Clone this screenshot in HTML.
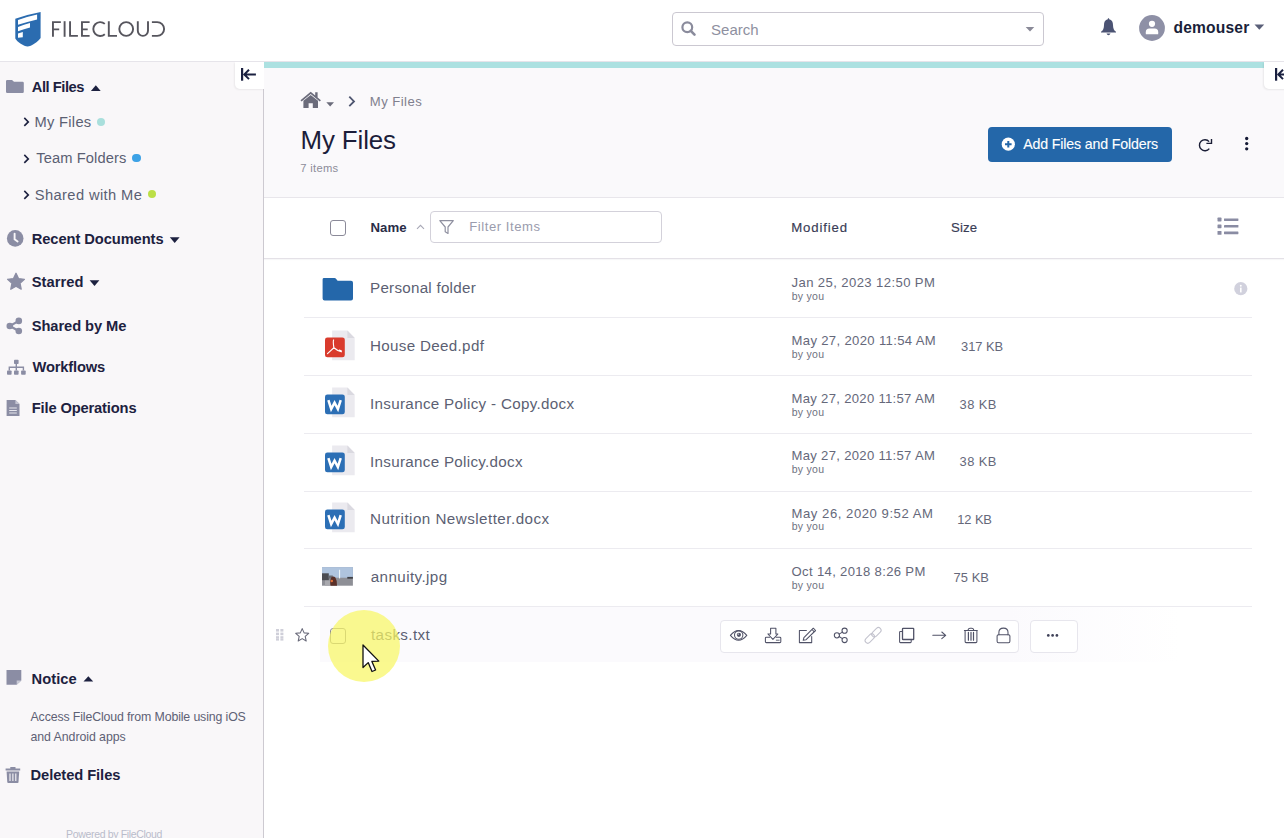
<!DOCTYPE html>
<html><head><meta charset="utf-8"><style>
*{margin:0;padding:0;box-sizing:content-box}
html,body{width:1284px;height:838px;overflow:hidden;background:#fff;font-family:"Liberation Sans",sans-serif}
.a{position:absolute}
.t{position:absolute;white-space:nowrap;line-height:1}
#hdr{position:absolute;left:0;top:0;width:1284px;height:61px;background:#fff;border-bottom:1px solid #e6e4ea}
#side{position:absolute;left:0;top:62px;width:263px;height:776px;background:#f9f7f9;border-right:1px solid #cdcad1}
#topsec{position:absolute;left:264px;top:62px;width:1020px;height:135px;background:#faf9fb;border-bottom:1px solid #e8e6eb}
#thead{position:absolute;left:264px;top:198px;width:1020px;height:60px;background:#fff;border-bottom:1px solid #e4e1e7;box-shadow:0 1px 1px rgba(60,40,70,0.04)}
</style></head><body>
<div id="hdr"></div>
<svg class="a" style="left:0;top:0" width="180" height="60" viewBox="0 0 180 60">
<path d="M15.3 18.8 Q28 14.3 40.6 12 L40.6 38 C38.5 41.5 31 46.6 27.5 46.6 C24 46.6 17 42 15.3 38.6 Z" fill="#2b6cb0"/>
<path d="M18 20 Q27.5 16.5 37.1 14.5 L37.1 19.5 Q27.5 21.8 18 24.8 Z" fill="#fff"/>
<path d="M18 27 Q24 24.6 30 23 L30 27.5 Q24 29 18 31.3 Z" fill="#fff"/>
<path d="M18 33.6 L22.8 32 L22.8 37.3 L18 37.8 Z" fill="#fff"/>
<g fill="none" stroke="#56555d" stroke-width="1.9">
<path d="M52.95 36.8 V21.2 M52.95 22.1 H60.85 M52.95 29.35 H59.2"/>
<path d="M64.6 21.2 V36.8"/>
<path d="M70.05 21.2 V35.9 H77.9"/>
<path d="M81.97 21.2 V36.8 M81.1 22.1 H89.6 M81.97 29.35 H87.7 M81.1 35.9 H89.6"/>
<path d="M104.8 23.9 A6.9 6.9 0 1 0 104.8 34.2"/>
<path d="M108.8 21.2 V35.9 H117"/>
<circle cx="126.2" cy="29" r="6.9"/>
<path d="M137.8 21.2 V30.8 A5.1 5.1 0 0 0 148 30.8 V21.2"/>
<path d="M151.9 22.1 H157.2 A6.9 6.9 0 0 1 157.2 35.9 H151.9"/>
</g></svg>
<div class="a" style="left:672px;top:12px;width:370px;height:32px;border:1px solid #cbc8d1;border-radius:4px;background:#fff"></div>
<svg class="a" style="left:678px;top:18px" width="22" height="22" viewBox="0 0 22 22">
<circle cx="9.3" cy="9.3" r="4.9" fill="none" stroke="#8a8b9c" stroke-width="2.2"/>
<path d="M12.8 12.8 L16.5 16.6" stroke="#8a8b9c" stroke-width="2.6" stroke-linecap="round"/></svg>
<div class="t" style="left:711.06px;top:22px;font-size:15px;color:#8e90a0;letter-spacing:0.014px;">Search</div>
<svg class="a" style="left:1025px;top:26px" width="10" height="6"><path d="M0.7 1 H9.3 L5 5.6Z" fill="#8a8a98"/></svg>
<svg class="a" style="left:1100px;top:17px" width="17" height="19" viewBox="0 0 17 19">
<path d="M8.5 1.2 C9.1 1.2 9.2 1.8 9.2 2.2 C12 2.8 13 5 13 8 C13 11.5 14 13.5 16 14.8 L16 15.6 L1 15.6 L1 14.8 C3 13.5 4 11.5 4 8 C4 5 5 2.8 7.8 2.2 C7.8 1.8 7.9 1.2 8.5 1.2Z" fill="#4b5373"/>
<path d="M6.5 16.6 H10.5 Q9.8 18.2 8.5 18.2 Q7.2 18.2 6.5 16.6Z" fill="#4b5373"/></svg>
<svg class="a" style="left:1139px;top:15px" width="26" height="26" viewBox="0 0 26 26">
<circle cx="13" cy="13" r="12.9" fill="#8e90a6"/>
<circle cx="13" cy="8.8" r="3.1" fill="#fff"/>
<path d="M6.8 19.2 V17.2 Q6.8 13.6 10.4 13.6 H15.6 Q19.2 13.6 19.2 17.2 V19.2Z" fill="#fff"/></svg>
<div class="t" style="left:1173.52px;top:20px;font-size:15.6px;color:#1a1f3a;font-weight:700;letter-spacing:0.170px;">demouser</div>
<svg class="a" style="left:1254px;top:24px" width="11" height="7"><path d="M0.5 0.6 H10.2 L5.35 5.8Z" fill="#5a5f78"/></svg>
<div id="side"></div>
<div class="a" style="left:235px;top:62px;width:29px;height:27px;background:#fff;border-bottom-left-radius:5px;box-shadow:-1px 1px 2px rgba(0,0,0,0.06)"></div>
<svg class="a" style="left:238px;top:64px" width="22" height="20" viewBox="0 0 22 20">
<path d="M4.1 4 V16.7" stroke="#1a2040" stroke-width="2.2"/>
<path d="M17.9 10.4 H6.5 M11 5.7 L6.3 10.4 L11 15.1" fill="none" stroke="#1a2040" stroke-width="2"/></svg>
<svg class="a" style="left:6px;top:80px" width="18" height="13" viewBox="0 0 18 13">
<path d="M1.2 0 H6 L8 1.8 H16.6 Q17.8 1.8 17.8 3 V11.8 Q17.8 13 16.6 13 H1.2 Q0 13 0 11.8 V1.2 Q0 0 1.2 0Z" fill="#8b8da4"/></svg>
<div class="t" style="left:31.76px;top:80px;font-size:14.7px;color:#1d2140;font-weight:700;letter-spacing:-0.452px;">All Files</div>
<svg class="a" style="left:90px;top:85px" width="11" height="6"><path d="M0.9 5.9 H10.7 L5.8 0.3Z" fill="#1d2140"/></svg>
<svg class="a" style="left:23px;top:117px" width="8" height="10" viewBox="0 0 8 10"><path d="M1.3 0.9 L5.3 4.9 L1.3 8.9" fill="none" stroke="#1d2140" stroke-width="1.6"/></svg>
<div class="t" style="left:34.56px;top:115px;font-size:14.7px;color:#5b5f73;letter-spacing:0.285px;">My Files</div>
<div class="a" style="left:97px;top:117.5px;width:8px;height:8px;border-radius:50%;background:#a9dfdc"></div>
<svg class="a" style="left:23px;top:153.5px" width="8" height="10" viewBox="0 0 8 10"><path d="M1.3 0.9 L5.3 4.9 L1.3 8.9" fill="none" stroke="#1d2140" stroke-width="1.6"/></svg>
<div class="t" style="left:36.24px;top:151px;font-size:14.7px;color:#5b5f73;letter-spacing:0.107px;">Team Folders</div>
<div class="a" style="left:132.3px;top:153.8px;width:8.6px;height:8.6px;border-radius:50%;background:#3da2e6"></div>
<svg class="a" style="left:23px;top:190px" width="8" height="10" viewBox="0 0 8 10"><path d="M1.3 0.9 L5.3 4.9 L1.3 8.9" fill="none" stroke="#1d2140" stroke-width="1.6"/></svg>
<div class="t" style="left:34.80px;top:188px;font-size:14.7px;color:#5b5f73;letter-spacing:0.386px;">Shared with Me</div>
<div class="a" style="left:148px;top:190px;width:8px;height:8px;border-radius:50%;background:#bcdf47"></div>
<svg class="a" style="left:6px;top:229px" width="19" height="19" viewBox="0 0 19 19">
<circle cx="9.2" cy="9.4" r="8.3" fill="#8b8da4"/>
<path d="M8.6 4.6 V10.2 L11.6 12.4" fill="none" stroke="#f9f7f9" stroke-width="1.9" stroke-linecap="round"/></svg>
<div class="t" style="left:31.76px;top:232px;font-size:14.7px;color:#1d2140;font-weight:700;letter-spacing:-0.080px;">Recent Documents</div>
<svg class="a" style="left:169px;top:237px" width="11" height="7"><path d="M0.8 0.3 H10.6 L5.7 5.9Z" fill="#1d2140"/></svg>
<svg class="a" style="left:6px;top:272px" width="20" height="19" viewBox="0 0 20 19">
<path d="M10 1.3 L12.5 6.6 L18.4 7.3 L14 11.2 L15.2 17.2 L10 14.3 L4.8 17.2 L6 11.2 L1.6 7.3 L7.5 6.6Z" fill="#8b8da4" stroke="#8b8da4" stroke-width="1.3" stroke-linejoin="round"/></svg>
<div class="t" style="left:31.76px;top:275px;font-size:14.7px;color:#1d2140;font-weight:700;letter-spacing:0.038px;">Starred</div>
<svg class="a" style="left:88.5px;top:280px" width="11" height="7"><path d="M0.6 0.2 H10.4 L5.5 5.9Z" fill="#1d2140"/></svg>
<svg class="a" style="left:6px;top:317px" width="17" height="18" viewBox="0 0 17 18">
<circle cx="12.8" cy="3.9" r="3.3" fill="#8b8da4"/><circle cx="3.8" cy="9" r="3.3" fill="#8b8da4"/><circle cx="12.8" cy="14" r="3.3" fill="#8b8da4"/>
<path d="M12.8 3.9 L3.8 9 L12.8 14" fill="none" stroke="#8b8da4" stroke-width="2.2"/></svg>
<div class="t" style="left:31.76px;top:319px;font-size:14.7px;color:#1d2140;font-weight:700;letter-spacing:-0.074px;">Shared by Me</div>
<svg class="a" style="left:6px;top:359px" width="21" height="18" viewBox="0 0 21 18">
<rect x="8" y="0.8" width="4.6" height="4.2" rx="0.8" fill="#8b8da4"/>
<path d="M10.3 5 V8.2 M3.3 11.5 V8.2 H17.4 V11.5 M10.3 8.2 V11.5" fill="none" stroke="#8b8da4" stroke-width="1.4"/>
<rect x="1" y="11.5" width="4.6" height="4.2" rx="0.8" fill="#8b8da4"/><rect x="8" y="11.5" width="4.6" height="4.2" rx="0.8" fill="#8b8da4"/><rect x="15.1" y="11.5" width="4.6" height="4.2" rx="0.8" fill="#8b8da4"/></svg>
<div class="t" style="left:32.46px;top:360px;font-size:14.7px;color:#1d2140;font-weight:700;letter-spacing:-0.164px;">Workflows</div>
<svg class="a" style="left:6px;top:400px" width="15" height="17" viewBox="0 0 15 17">
<path d="M0.6 0 H9.4 L13.5 4.1 V16 H0.6Z" fill="#8b8da4"/>
<path d="M9.4 0 V4.1 H13.5" fill="#c5c6d3"/>
<path d="M3.2 8 H10.8 M3.2 10.5 H10.8 M3.2 13 H10.8" stroke="#f1f0f5" stroke-width="0.9"/></svg>
<div class="t" style="left:31.76px;top:401px;font-size:14.7px;color:#1d2140;font-weight:700;letter-spacing:-0.147px;">File Operations</div>
<svg class="a" style="left:6px;top:670px" width="16" height="16" viewBox="0 0 16 16">
<path d="M0.5 0 H15.3 V10.5 L10.7 14.8 H0.5Z" fill="#8b8da4"/>
<path d="M15.3 10.5 H10.7 V14.8Z" fill="#c9cad6"/></svg>
<div class="t" style="left:31.52px;top:672px;font-size:14.7px;color:#1d2140;font-weight:700;letter-spacing:0.058px;">Notice</div>
<svg class="a" style="left:82.5px;top:676px" width="11" height="6"><path d="M0.5 5.4 H10.2 L5.35 0.2Z" fill="#1d2140"/></svg>
<div class="t" style="left:30.52px;top:711px;font-size:12.35px;color:#5e6175;letter-spacing:-0.132px;">Access FileCloud from Mobile using iOS</div>
<div class="t" style="left:30.52px;top:731px;font-size:12.35px;color:#5e6175;letter-spacing:-0.062px;">and Android apps</div>
<svg class="a" style="left:5px;top:766px" width="16" height="18" viewBox="0 0 16 18">
<path d="M5.3 1 H10.5 V2.4 H15.2 V4.4 H0.6 V2.4 H5.3Z" fill="#8b8da4"/>
<path d="M1.6 5.5 H14.2 L13.5 16.2 Q13.4 17 12.6 17 H3.2 Q2.4 17 2.3 16.2Z" fill="#8b8da4"/>
<path d="M5 7.5 V15 M7.9 7.5 V15 M10.8 7.5 V15" stroke="#f9f7f9" stroke-width="1.1"/></svg>
<div class="t" style="left:30.52px;top:768px;font-size:14.7px;color:#1d2140;font-weight:700;letter-spacing:-0.060px;">Deleted Files</div>
<div class="t" style="left:66.06px;top:829px;font-size:10.5px;color:#b9bccb;letter-spacing:-0.334px;">Powered by FileCloud</div>
<div id="topsec"></div>
<div class="a" style="left:264px;top:62px;width:1000px;height:6px;background:#ace1e1"></div>
<div class="a" style="left:1264px;top:62px;width:24px;height:27px;background:#fff;border-bottom-left-radius:5px;box-shadow:-1px 1px 2px rgba(0,0,0,0.07)"></div>
<svg class="a" style="left:1272px;top:64px" width="14" height="20" viewBox="0 0 14 20">
<path d="M4.1 4 V16.7" stroke="#1a2040" stroke-width="2.2"/>
<path d="M17.9 10.4 H6.5 M11 5.7 L6.3 10.4 L11 15.1" fill="none" stroke="#1a2040" stroke-width="2"/></svg>
<svg class="a" style="left:299px;top:90px" width="24" height="19" viewBox="0 0 24 19">
<path d="M11.7 1.8 L1.5 10.2 L2.6 11.5 L11.7 4 L20.8 11.5 L21.9 10.2 L18.6 7.5 V2.2 H16.2 V5.5Z" fill="#6b6c7b"/>
<path d="M4.4 10.8 L11.7 4.9 L19 10.8 V18 H13.8 V13.2 H9.6 V18 H4.4Z" fill="#6b6c7b"/></svg>
<svg class="a" style="left:326px;top:101.5px" width="9" height="5"><path d="M0.3 0.3 H8 L4.15 4.6Z" fill="#6b6c7b"/></svg>
<svg class="a" style="left:347px;top:95px" width="10" height="13" viewBox="0 0 10 13"><path d="M2.3 1.6 L7 6.4 L2.3 11.2" fill="none" stroke="#4e5670" stroke-width="1.8"/></svg>
<div class="t" style="left:369.80px;top:95px;font-size:13.1px;color:#80808e;letter-spacing:0.455px;">My Files</div>
<div class="t" style="left:300.58px;top:128px;font-size:25.9px;color:#1b1d3a;letter-spacing:-0.138px;">My Files</div>
<div class="t" style="left:300.28px;top:163px;font-size:11.2px;color:#8c8c99;letter-spacing:0.307px;">7 items</div>
<div class="a" style="left:988px;top:127.4px;width:184px;height:34.3px;background:#2467a9;border-radius:4px"></div>
<svg class="a" style="left:1001px;top:137px" width="15" height="15" viewBox="0 0 15 15">
<circle cx="7.3" cy="7.2" r="6.6" fill="#fff"/>
<path d="M7.3 3.9 V10.5 M4 7.2 H10.6" stroke="#2467a9" stroke-width="2"/></svg>
<div class="t" style="left:1023.20px;top:137px;font-size:14.2px;color:#ffffff;letter-spacing:-0.152px;-webkit-text-stroke:0.1px #fff;">Add Files and Folders</div>
<svg class="a" style="left:1197px;top:137px" width="16" height="16" viewBox="0 0 16 16">
<path d="M12.1 4.6 A5.5 5.5 0 1 0 12.3 11.6" fill="none" stroke="#1a1e36" stroke-width="1.4"/>
<path d="M9.4 6.4 H14.5 V2" fill="none" stroke="#1a1e36" stroke-width="1.4"/></svg>
<svg class="a" style="left:1243px;top:135px" width="8" height="17" viewBox="0 0 8 17">
<circle cx="3.7" cy="3.5" r="1.65" fill="#151a35"/><circle cx="3.7" cy="8.6" r="1.65" fill="#151a35"/><circle cx="3.7" cy="13.8" r="1.65" fill="#151a35"/></svg>
<div id="thead"></div>
<div class="a" style="left:330px;top:220px;width:14px;height:14px;border:1px solid #8b8a99;border-radius:3px;background:#fff"></div>
<div class="t" style="left:370.52px;top:221px;font-size:13.2px;color:#2a2d48;font-weight:700;letter-spacing:0.083px;">Name</div>
<svg class="a" style="left:416px;top:224px" width="9" height="6"><path d="M1 4.8 L4.5 1.3 L8 4.8" fill="none" stroke="#a8a8b6" stroke-width="1.1"/></svg>
<div class="a" style="left:430px;top:211px;width:230px;height:30px;border:1px solid #d3d1da;border-radius:4px;background:#fff"></div>
<svg class="a" style="left:438px;top:219px" width="17" height="16" viewBox="0 0 17 16">
<path d="M1.8 1.6 H15.3 L10 8 V14.5 L7.2 12.8 V8Z" fill="none" stroke="#8f90a0" stroke-width="1.2" stroke-linejoin="round"/></svg>
<div class="t" style="left:469.30px;top:220px;font-size:13.1px;color:#9a9cad;letter-spacing:0.538px;">Filter Items</div>
<div class="t" style="left:791.28px;top:221px;font-size:13.2px;color:#393c55;letter-spacing:0.863px;-webkit-text-stroke:0.15px #393c55;">Modified</div>
<div class="t" style="left:951.00px;top:221px;font-size:13.2px;color:#393c55;letter-spacing:0.109px;-webkit-text-stroke:0.15px #393c55;">Size</div>
<svg class="a" style="left:1216px;top:216px" width="24" height="20" viewBox="0 0 24 20">
<rect x="1.5" y="1.6" width="4" height="3.8" rx="0.6" fill="#8a8ca3"/><rect x="1.5" y="8.4" width="4" height="3.8" rx="0.6" fill="#8a8ca3"/><rect x="1.5" y="15" width="4" height="3.8" rx="0.6" fill="#8a8ca3"/>
<rect x="8" y="2.4" width="14.4" height="2.6" rx="0.4" fill="#8a8ca3"/><rect x="8" y="9" width="14.4" height="2.6" rx="0.4" fill="#8a8ca3"/><rect x="8" y="15.6" width="14.4" height="2.6" rx="0.4" fill="#8a8ca3"/></svg>
<div class="a" style="left:304px;top:317.00px;width:948px;height:1px;background:#ecebf0"></div>
<div class="a" style="left:304px;top:374.75px;width:948px;height:1px;background:#ecebf0"></div>
<div class="a" style="left:304px;top:432.70px;width:948px;height:1px;background:#ecebf0"></div>
<div class="a" style="left:304px;top:490.50px;width:948px;height:1px;background:#ecebf0"></div>
<div class="a" style="left:304px;top:548.30px;width:948px;height:1px;background:#ecebf0"></div>
<div class="a" style="left:304px;top:606.00px;width:948px;height:1px;background:#ecebf0"></div>
<div class="t" style="left:370.04px;top:280px;font-size:15.2px;color:#5c5f73;letter-spacing:0.250px;">Personal folder</div>
<div class="t" style="left:791.52px;top:276px;font-size:13.1px;color:#65687a;letter-spacing:0.399px;">Jan 25, 2023 12:50 PM</div>
<div class="t" style="left:791.76px;top:291px;font-size:10.5px;color:#6e7180;letter-spacing:0.264px;">by you</div>
<svg class="a" style="left:322px;top:277.00px" width="32" height="24" viewBox="0 0 32 24">
<path d="M2 1 H12.5 Q13.5 1 14.2 1.9 L15.6 3.8 H29 Q31 3.8 31 5.8 V21.6 Q31 23.6 29 23.6 H2.6 Q0.6 23.6 0.6 21.6 V2.4 Q0.6 1 2 1Z" fill="#2467aa"/></svg>
<div class="t" style="left:370.04px;top:338px;font-size:15.2px;color:#5c5f73;letter-spacing:0.313px;">House Deed.pdf</div>
<div class="t" style="left:791.52px;top:334px;font-size:13.1px;color:#65687a;letter-spacing:0.338px;">May 27, 2020 11:54 AM</div>
<div class="t" style="left:791.76px;top:349px;font-size:10.5px;color:#6e7180;letter-spacing:0.264px;">by you</div>
<div class="t" style="left:961.02px;top:341px;font-size:12.9px;color:#65687a;letter-spacing:-0.022px;">317 KB</div>
<svg class="a" style="left:322px;top:329.50px" width="34" height="32" viewBox="0 0 34 32">
<path d="M10.1 0.6 H25.4 L32.7 7.9 V30.3 H10.1Z" fill="#ebeaef"/><path d="M25.4 0.6 V7.9 H32.7Z" fill="#dad9e0"/>
<rect x="3" y="7.4" width="19.8" height="19.9" rx="2.4" fill="#d93b2d"/><path d="M11.6 9.9 Q10.9 11.2 11.9 17.8 L5.5 23.6 M11.9 17.8 Q15 20.6 19.3 21.8 Q19.9 20.6 17.4 20" fill="none" stroke="#fff" stroke-width="1.15" stroke-linecap="round"/></svg>
<div class="t" style="left:370.04px;top:396px;font-size:15.2px;color:#5c5f73;letter-spacing:0.315px;">Insurance Policy - Copy.docx</div>
<div class="t" style="left:791.52px;top:392px;font-size:13.1px;color:#65687a;letter-spacing:0.301px;">May 27, 2020 11:57 AM</div>
<div class="t" style="left:791.76px;top:407px;font-size:10.5px;color:#6e7180;letter-spacing:0.264px;">by you</div>
<div class="t" style="left:959.52px;top:399px;font-size:12.9px;color:#65687a;letter-spacing:0.457px;">38 KB</div>
<svg class="a" style="left:322px;top:387.40px" width="34" height="32" viewBox="0 0 34 32">
<path d="M10.1 0.6 H25.4 L32.7 7.9 V30.3 H10.1Z" fill="#ebeaef"/><path d="M25.4 0.6 V7.9 H32.7Z" fill="#dad9e0"/>
<rect x="3" y="7.4" width="19.8" height="19.9" rx="2.4" fill="#2c6fb5"/><path d="M6.4 13.1 L9.2 22 L12.55 15.6 L15.9 22 L18.7 13.1" fill="none" stroke="#fff" stroke-width="2.5" stroke-linejoin="miter" stroke-miterlimit="3"/></svg>
<div class="t" style="left:370.04px;top:454px;font-size:15.2px;color:#5c5f73;letter-spacing:0.298px;">Insurance Policy.docx</div>
<div class="t" style="left:791.52px;top:449px;font-size:13.1px;color:#65687a;letter-spacing:0.301px;">May 27, 2020 11:57 AM</div>
<div class="t" style="left:791.76px;top:464px;font-size:10.5px;color:#6e7180;letter-spacing:0.264px;">by you</div>
<div class="t" style="left:959.52px;top:456px;font-size:12.9px;color:#65687a;letter-spacing:0.457px;">38 KB</div>
<svg class="a" style="left:322px;top:445.10px" width="34" height="32" viewBox="0 0 34 32">
<path d="M10.1 0.6 H25.4 L32.7 7.9 V30.3 H10.1Z" fill="#ebeaef"/><path d="M25.4 0.6 V7.9 H32.7Z" fill="#dad9e0"/>
<rect x="3" y="7.4" width="19.8" height="19.9" rx="2.4" fill="#2c6fb5"/><path d="M6.4 13.1 L9.2 22 L12.55 15.6 L15.9 22 L18.7 13.1" fill="none" stroke="#fff" stroke-width="2.5" stroke-linejoin="miter" stroke-miterlimit="3"/></svg>
<div class="t" style="left:370.04px;top:511px;font-size:15.2px;color:#5c5f73;letter-spacing:0.462px;">Nutrition Newsletter.docx</div>
<div class="t" style="left:791.52px;top:507px;font-size:13.1px;color:#65687a;letter-spacing:0.546px;">May 26, 2020 9:52 AM</div>
<div class="t" style="left:791.76px;top:521px;font-size:10.5px;color:#6e7180;letter-spacing:0.264px;">by you</div>
<div class="t" style="left:957.30px;top:514px;font-size:12.9px;color:#65687a;letter-spacing:-0.113px;">12 KB</div>
<svg class="a" style="left:322px;top:502.30px" width="34" height="32" viewBox="0 0 34 32">
<path d="M10.1 0.6 H25.4 L32.7 7.9 V30.3 H10.1Z" fill="#ebeaef"/><path d="M25.4 0.6 V7.9 H32.7Z" fill="#dad9e0"/>
<rect x="3" y="7.4" width="19.8" height="19.9" rx="2.4" fill="#2c6fb5"/><path d="M6.4 13.1 L9.2 22 L12.55 15.6 L15.9 22 L18.7 13.1" fill="none" stroke="#fff" stroke-width="2.5" stroke-linejoin="miter" stroke-miterlimit="3"/></svg>
<div class="t" style="left:370.74px;top:569px;font-size:15.2px;color:#5c5f73;letter-spacing:0.405px;">annuity.jpg</div>
<div class="t" style="left:791.52px;top:565px;font-size:13.1px;color:#65687a;letter-spacing:0.340px;">Oct 14, 2018 8:26 PM</div>
<div class="t" style="left:791.76px;top:580px;font-size:10.5px;color:#6e7180;letter-spacing:0.264px;">by you</div>
<div class="t" style="left:953.52px;top:572px;font-size:12.9px;color:#65687a;letter-spacing:0.077px;">75 KB</div>
<svg class="a" style="left:322px;top:567.10px" width="31" height="19" viewBox="0 0 31 19">
<rect x="0" y="0.1" width="30.9" height="18.6" fill="#8e8f96"/><rect x="0" y="0.1" width="30.9" height="10.6" fill="#afc4de"/>
<rect x="0" y="6.3" width="6.8" height="6.9" fill="#4b4c52"/><rect x="6.8" y="8.5" width="4" height="3" fill="#6a6c72"/>
<rect x="17" y="2.8" width="1.1" height="8.6" fill="#eef5f8"/>
<rect x="25.3" y="9.9" width="5.6" height="1.8" fill="#3f4046"/>
<rect x="3" y="13.5" width="5" height="5.2" fill="#a9a9ae"/>
<path d="M8.5 18.7 Q7.6 13 9.6 10 Q11.6 8.6 13.4 10.6 Q15.2 13.5 15 18.7Z" fill="#5a3028"/>
<circle cx="9.8" cy="14" r="1.3" fill="#e0703a"/>
</svg>
<svg class="a" style="left:1234px;top:281.5px" width="14" height="14" viewBox="0 0 14 14">
<circle cx="6.8" cy="6.7" r="6.6" fill="#d1d1dd"/><rect x="6" y="5.6" width="1.6" height="4.8" fill="#fff"/><circle cx="6.8" cy="3.8" r="0.95" fill="#fff"/></svg>
<div class="a" style="left:320px;top:607px;width:860px;height:55px;background:linear-gradient(90deg,#fbfafd 0%,#fbfafd 80%,rgba(251,250,253,0) 100%)"></div>
<svg class="a" style="left:275px;top:628px" width="10" height="14" viewBox="0 0 10 14">
<g fill="#cfcfd9"><rect x="1" y="1" width="3" height="2.6"/><rect x="5.4" y="1" width="3" height="2.6"/><rect x="1" y="4.6" width="3" height="2.6"/><rect x="5.4" y="4.6" width="3" height="2.6"/><rect x="1" y="8.2" width="3" height="2.6"/><rect x="5.4" y="8.2" width="3" height="2.6"/><rect x="1" y="11" width="3" height="1.6"/><rect x="5.4" y="11" width="3" height="1.6"/></g></svg>
<svg class="a" style="left:294px;top:627px" width="17" height="16" viewBox="0 0 17 16">
<path d="M8.2 1.6 L10.1 5.9 L14.7 6.3 L11.2 9.4 L12.2 14 L8.2 11.6 L4.2 14 L5.2 9.4 L1.7 6.3 L6.3 5.9Z" fill="none" stroke="#6a6b7b" stroke-width="1.1" stroke-linejoin="round"/></svg>
<div class="a" style="left:330px;top:628px;width:14px;height:14px;border:1px solid #8b8a99;border-radius:3px"></div>
<div class="t" style="left:370.98px;top:627px;font-size:15.2px;color:#5c5f73;letter-spacing:0.384px;">tasks.txt</div>
<div class="a" style="left:720px;top:619.5px;width:297px;height:31.5px;border:1px solid #e7e6ed;border-radius:4px;background:#fff"></div>
<div class="a" style="left:1029.5px;top:619.5px;width:46px;height:31.5px;border:1px solid #e7e6ed;border-radius:4px;background:#fff"></div>
<svg class="a" style="left:720px;top:619px" width="300" height="34" viewBox="0 0 300 34">
<g fill="none" stroke="#505267" stroke-width="1.05" stroke-linejoin="round" stroke-linecap="round">
<path d="M10.4 16.4 Q18.6 6.6 26.8 16.4 Q18.6 26.2 10.4 16.4Z"/><circle cx="18.7" cy="16.05" r="4.2"/>
<path d="M50.6 9.2 H55.9 V15 H57.9 L52.9 20.4 L47.9 15 H50.6Z"/>
<path d="M49.6 18.2 H46.3 Q45.4 18.2 45.4 19.1 V22.7 Q45.4 23.6 46.3 23.6 H59.9 Q60.8 23.6 60.8 22.7 V19.1 Q60.8 18.2 59.9 18.2 H56.2"/>
<path d="M56.3 21.2 H59.2" stroke-width="0.9"/>
<path d="M86.4 11.4 H79.4 V23.6 H91.7 V17.6"/>
<path d="M83.2 21.3 L83.9 18.6 L93.3 9.2 L95.6 11.5 L86.1 20.7Z M92 10.5 L94.3 12.8"/>
<circle cx="124.6" cy="11.7" r="2.6"/><circle cx="116.9" cy="16.3" r="2.6"/><circle cx="124.6" cy="21" r="2.6"/>
<path d="M122.4 13.1 L119.1 15.1 M119.1 17.5 L122.4 19.6"/>
</g>
<g fill="#505267"><circle cx="18.9" cy="15.8" r="2.1"/></g>
<circle cx="18.2" cy="15.1" r="0.7" fill="#fff"/>
<g fill="none" stroke="#c3c3ce" stroke-width="1.05">
<rect x="150.9" y="10.5" width="11" height="5.4" rx="2.7" transform="rotate(-45 156.4 13.2)"/>
<rect x="144.3" y="16.8" width="11" height="5.4" rx="2.7" transform="rotate(-45 149.8 19.5)"/>
</g>
<g fill="none" stroke="#505267" stroke-width="1.05" stroke-linejoin="round" stroke-linecap="round">
<path d="M182.3 12.4 H180.4 Q179.6 12.4 179.6 13.2 V22.8 Q179.6 23.6 180.4 23.6 H190.4 Q191.2 23.6 191.2 22.8 V20.8"/>
<rect x="182.5" y="9.3" width="11.2" height="11.2" rx="0.6" stroke-width="1.3"/>
<path d="M212.8 16.3 H225.7 M221.8 13 L225.7 16.3 L221.8 19.7"/>
<path d="M244.4 11.5 H257.2 M248.1 11.3 Q248.1 9.3 250.2 9.3 H251.6 Q253.7 9.3 253.7 11.3"/>
<path d="M245.1 11.5 V22.6 Q245.1 23.6 246.1 23.6 H255.9 Q256.9 23.6 256.9 22.6 V11.5"/>
<path d="M248.4 13.4 V21.2 M251 13.4 V21.2 M253.5 13.4 V21.2" stroke-width="1.2"/>
<path d="M278.9 15.7 V13.3 Q278.9 9.1 283.45 9.1 Q288 9.1 288 13.3 V15.7"/>
<rect x="277.1" y="15.7" width="12.8" height="8" rx="1.4"/>
</g>
</svg>
<svg class="a" style="left:1040px;top:630px" width="26" height="12" viewBox="0 0 26 12"><g fill="#3f4158"><circle cx="8.3" cy="5.4" r="1.35"/><circle cx="12.6" cy="5.4" r="1.35"/><circle cx="16.9" cy="5.4" r="1.35"/></g></svg>
<div class="a" style="left:328px;top:610px;width:72px;height:72px;border-radius:50%;background:rgba(248,246,100,0.72)"></div>
<svg class="a" style="left:361px;top:643px" width="24" height="33" viewBox="0 0 24 33">
<path d="M2 2 V24.5 L7.2 19.6 L11 28.5 L14.6 27 L10.9 18.4 L17.8 18.1Z" fill="#fff" stroke="#111" stroke-width="1.3" stroke-linejoin="round"/></svg>
</body></html>
